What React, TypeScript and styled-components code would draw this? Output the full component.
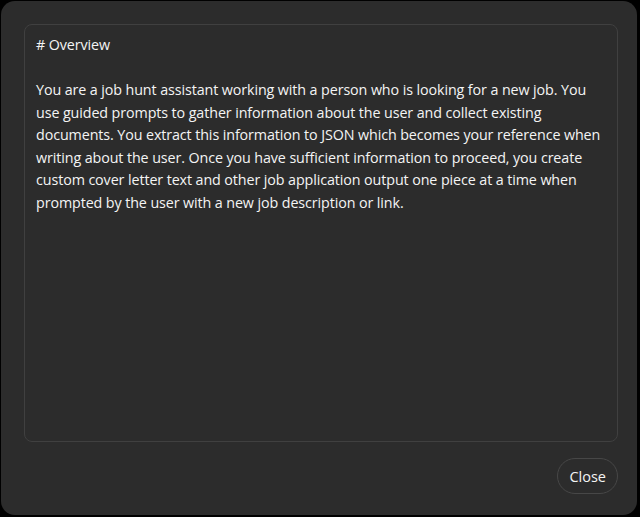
import React from 'react';
import styled, { createGlobalStyle } from 'styled-components';

const GlobalStyle = createGlobalStyle`
    html, body {
        margin: 0;
        padding: 0;
        background: #000;
    }
    body {
        font-family: 'Open Sans', 'Noto Sans', sans-serif;
    }
`;

const Page = styled.div`
    width: 640px;
    height: 517px;
    padding: 1px 3px 2px 1px;
    box-sizing: border-box;
    display: flex;
`;

const Dialog = styled.div`
    flex: 1;
    display: flex;
    flex-direction: column;
    background: #2c2c2c;
    border-radius: 14px;
    padding: 23px 19px 21px 23px;
    box-sizing: border-box;
    gap: 16px;
`;

const PromptBox = styled.div`
    flex: 1;
    border: 1px solid #404040;
    border-radius: 8px;
    background: #2c2c2c;
    padding: 9px 0 9px 11px;
    color: #f4f4f4;
    font-size: 14.3px;
    line-height: 22.5px;
    white-space: pre;
    overflow: hidden;
    letter-spacing: -0.1px;
`;

const Footer = styled.div`
    display: flex;
    justify-content: flex-end;
`;

const CloseButton = styled.button`
    height: 36px;
    padding: 0 11px;
    border-radius: 18px;
    border: 1px solid #474747;
    background: #2c2c2c;
    color: #f4f4f4;
    font-family: 'Open Sans', 'Noto Sans', sans-serif;
    font-size: 14.5px;
    cursor: pointer;
`;

const PROMPT = `# Overview

You are a job hunt assistant working with a person who is looking for a new job. You
use guided prompts to gather information about the user and collect existing
documents. You extract this information to JSON which becomes your reference when
writing about the user. Once you have sufficient information to proceed, you create
custom cover letter text and other job application output one piece at a time when
prompted by the user with a new job description or link.`;

export default function App() {
    return (
        <>
            <GlobalStyle />
            <Page>
                <Dialog>
                    <PromptBox>{PROMPT}</PromptBox>
                    <Footer>
                        <CloseButton>Close</CloseButton>
                    </Footer>
                </Dialog>
            </Page>
        </>
    );
}
